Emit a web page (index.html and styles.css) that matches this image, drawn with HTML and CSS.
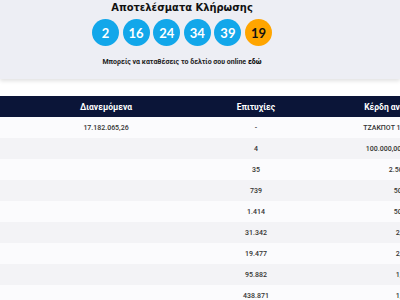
FILE: index.html
```html
<!DOCTYPE html>
<html lang="el">
<head>
<meta charset="utf-8">
<link rel="stylesheet" href="styles.css">
</head>
<body>
<section class="results">
  <h2 class="title">Αποτελέσματα Κλήρωσης</h2>
  <div class="balls">
    <span class="ball">2</span>
    <span class="ball">16</span>
    <span class="ball">24</span>
    <span class="ball">34</span>
    <span class="ball">39</span>
    <span class="ball bonus">19</span>
  </div>
  <p class="note">Μπορείς να καταθέσεις το δελτίο σου <span class="online">online</span> <a class="here">εδώ</a></p>
</section>
<div class="table-wrap">
<table class="prizes">
  <thead>
    <tr><th class="c1">Διανεμόμενα</th><th class="c2">Επιτυχίες</th><th class="c3">Κέρδη ανά επιτυχία</th></tr>
  </thead>
  <tbody>
    <tr><td>17.182.065,26</td><td>-</td><td>ΤΖΑΚΠΟΤ 17.182.065,26</td></tr>
    <tr><td></td><td>4</td><td>100.000,00 (50.000,00)</td></tr>
    <tr><td></td><td>35</td><td>2.500,00</td></tr>
    <tr><td></td><td>739</td><td>50,00</td></tr>
    <tr><td></td><td>1.414</td><td>50,00</td></tr>
    <tr><td></td><td>31.342</td><td>2,00</td></tr>
    <tr><td></td><td>19.477</td><td>2,00</td></tr>
    <tr><td></td><td>95.882</td><td>1,50</td></tr>
    <tr><td></td><td>438.871</td><td>1,00</td></tr>
  </tbody>
</table>
</div>
</body>
</html>
```
FILE: styles.css
```css
html, body {
  margin: 0;
  padding: 0;
  background: #ffffff;
  overflow: hidden;
  font-family: Roboto, "Noto Sans", sans-serif;
  color: #222;
}
.results {
  background: #edeef4;
  height: 79px;
  box-shadow: 0 2px 4px rgba(0,0,0,0.12);
  display: flex;
  flex-direction: column;
  align-items: center;
  padding-right: 36px;
}
.title {
  margin: 0;
  font-family: "DejaVu Sans Condensed", "DejaVu Sans", sans-serif;
  font-size: 11px;
  font-weight: 700;
  line-height: 16px;
  color: #111;
}
.balls {
  display: flex;
  gap: 3.6px;
  margin-top: 3px;
}
.ball {
  width: 27px;
  height: 27px;
  border-radius: 50%;
  background: #12a7ea;
  color: #fff;
  font-family: Lato, Roboto, sans-serif;
  font-weight: 700;
  font-size: 13px;
  display: flex;
  align-items: center;
  justify-content: center;
}
.ball.bonus {
  background: #ffa500;
  color: #111;
}
.note {
  margin: 11px 0 0;
  font-size: 7px;
  line-height: 10px;
  font-weight: 700;
  color: #222;
}
.online { color: #222; }
.here { font-weight: 900; color: #111; }
.table-wrap {
  margin-top: 17px;
  width: 505px;
}
.prizes {
  border-collapse: collapse;
  width: 505px;
  table-layout: fixed;
}
.prizes th {
  background: #0b1538;
  color: #fff;
  font-size: 8.5px;
  font-weight: 700;
  height: 21px;
  padding: 0;
}
.c1 { width: 212px; }
.c2 { width: 88px; }
.c3 { width: 205px; }
.prizes td {
  height: 21px;
  padding: 0;
  text-align: center;
  font-size: 7px;
  font-weight: 500;
  color: #333;
  white-space: nowrap;
}
.prizes tbody tr:nth-child(odd) { background: #fbfbfd; }
.prizes tbody tr:nth-child(even) { background: #f3f3f6; }
```
